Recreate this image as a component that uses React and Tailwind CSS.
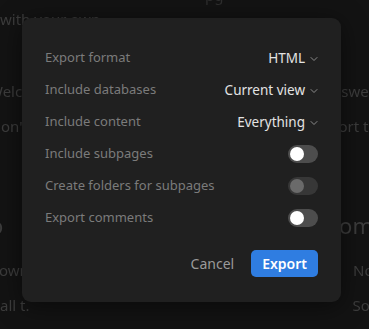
import React, { useState } from "react";

const Chevron = () => (
  <svg width="8" height="6" viewBox="0 0 8 6" fill="none" className="ml-[5px] mt-[1px]">
    <path d="M1 1.5 L4 4.5 L7 1.5" stroke="#8a8a8a" strokeWidth="1" strokeLinecap="round" strokeLinejoin="round" />
  </svg>
);

const Toggle = ({ on, disabled, onClick }) => (
  <button
    onClick={disabled ? undefined : onClick}
    className={`w-[30px] h-[18px] rounded-full flex items-center px-[2px] ${
      disabled ? "bg-[#373737]" : on ? "bg-[#2f7de1] justify-end" : "bg-[#4d4d4d]"
    }`}
  >
    <span className={`w-[14px] h-[14px] rounded-full ${disabled ? "bg-[#6a6a6a]" : "bg-white"}`} />
  </button>
);

const Row = ({ label, children }) => (
  <div className="h-[32px] flex items-center justify-between">
    <span className="text-[13px] text-[#7b7b7b]">{label}</span>
    {children}
  </div>
);

const Select = ({ value }) => (
  <div className="flex items-center text-[13.5px] text-[#e3e3e3]">
    {value}
    <Chevron />
  </div>
);

const App = () => {
  const [subpages, setSubpages] = useState(false);
  const [comments, setComments] = useState(false);

  return (
    <div className="relative w-[369px] h-[329px] overflow-hidden bg-[#131313]" style={{ fontFamily: '"Noto Sans", "Open Sans", sans-serif' }}>
      {/* faded page behind the dialog */}
      <div className="text-[#3c3c3c] text-[15px] leading-none blur-[0.4px]">
        <div className="h-[6px] pl-[205px] -mt-[12px] text-[#2e2e2e]">pg</div>
        <div className="mt-[18px]">with your own</div>
        <div className="mt-[57px] flex justify-between">
          <span className="-ml-[11px]">Welc</span>
          <span className="-mr-[6px]">swer</span>
        </div>
        <div className="mt-[20px] flex justify-between">
          <span className="-ml-[10px]">Don't</span>
          <span className="-mr-[8px]">port te</span>
        </div>
        <div className="mt-[80px] flex justify-between text-[22px]">
          <span className="-ml-[10px]">o</span>
          <span className="-mr-[4px]">om</span>
        </div>
        <div className="mt-[27px] flex justify-between">
          <span className="-ml-[12px]">Downlo</span>
          <span className="-mr-[10px]">Not</span>
        </div>
        <div className="mt-[20px] flex justify-between">
          <span>all t.</span>
          <span className="-mr-[8px]">Soc</span>
        </div>
        <div className="mt-[16px] flex justify-between">
          <span>te your first page</span>
          <span className="-mr-[12px] flex items-center gap-[6px]">
            <span className="w-[6px] h-[3px] bg-[#3c3c3c]" />
            Usi
          </span>
        </div>
      </div>

      {/* dialog */}
      <div className="absolute left-[22px] top-[18px] w-[319px] h-[284px] rounded-[9px] bg-[#202020] shadow-[0_4px_24px_rgba(0,0,0,0.5)] px-[23px] pt-[24px] flex flex-col">
        <Row label="Export format">
          <Select value="HTML" />
        </Row>
        <Row label="Include databases">
          <Select value="Current view" />
        </Row>
        <Row label="Include content">
          <Select value="Everything" />
        </Row>
        <Row label="Include subpages">
          <Toggle on={subpages} onClick={() => setSubpages(!subpages)} />
        </Row>
        <Row label="Create folders for subpages">
          <Toggle disabled />
        </Row>
        <Row label="Export comments">
          <Toggle on={comments} onClick={() => setComments(!comments)} />
        </Row>
        <div className="mt-[16px] flex justify-end items-center gap-[16px]">
          <button className="text-[14px] text-[#9a9a9a] px-[1px]">Cancel</button>
          <button className="h-[27px] px-[11px] rounded-[5px] bg-[#2f7de1] text-white text-[14px] font-semibold">
            Export
          </button>
        </div>
      </div>
    </div>
  );
};

export default App;
